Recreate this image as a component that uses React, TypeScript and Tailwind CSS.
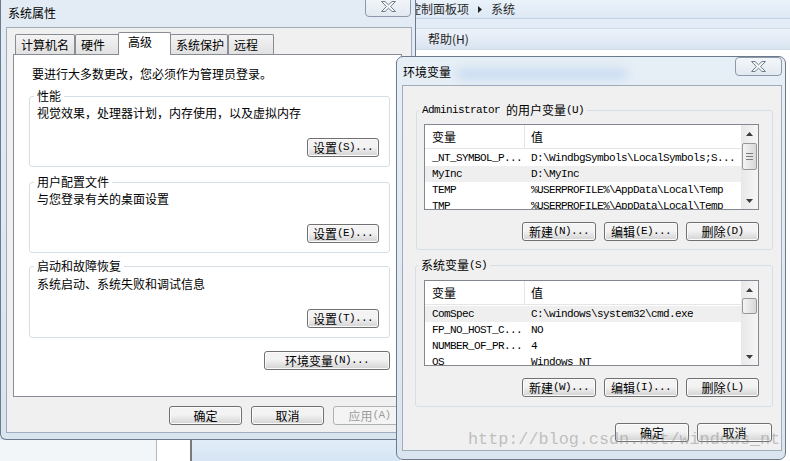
import React from 'react';
import clsx from 'clsx';

const mono = "font-['Liberation_Mono','Noto_Sans_CJK_SC',monospace] text-[11px] tracking-[-0.6px]";

function Acc({ zh, en }: { zh: string; en?: string }) {
  return (
    <>
      <span>{zh}</span>
      {en && <span className={mono}>{en}</span>}
    </>
  );
}

function Btn({ className, disabled, children }: { className?: string; disabled?: boolean; children: React.ReactNode }) {
  return (
    <div
      className={clsx(
        'flex h-[19px] shrink-0 items-center justify-center rounded-[3px] border leading-none',
        disabled
          ? 'border-[#adb2b5] bg-[#f4f4f4] text-[#9c9c9c]'
          : 'border-[#707070] bg-linear-to-b from-[#f3f3f3] from-45% to-[#d3d3d3] text-black shadow-[inset_0_0_0_1px_#fbfbfb]',
        className
      )}
    >
      {children}
    </div>
  );
}

function CloseBtn({ className }: { className: string }) {
  return (
    <div className={clsx('absolute flex items-center justify-center rounded-[4px] border border-[#8d99a8] bg-linear-to-b from-[#f4f7fa] to-[#e2e9f0]', className)}>
      <svg width="15" height="11" viewBox="0 0 15 11">
        <polygon
          points="0.5,0.5 4,0.5 7.5,3.8 11,0.5 14.5,0.5 9.6,5.5 14.5,10.5 11,10.5 7.5,7.2 4,10.5 0.5,10.5 5.4,5.5"
          fill="#f7f9fb"
          stroke="#6f7c8c"
          strokeWidth="1"
          strokeLinejoin="round"
        />
      </svg>
    </div>
  );
}

function Group({ label, labelClass, className, children }: { label: React.ReactNode; labelClass: string; className: string; children: React.ReactNode }) {
  return (
    <div className={clsx('relative flex shrink-0 flex-col rounded-[3px] border border-[#d5dfe5]', className)}>
      <span className={clsx('absolute -top-[8px] flex items-center px-[3px] leading-[14px] whitespace-nowrap', labelClass)}>{label}</span>
      {children}
    </div>
  );
}

function Arrow({ down }: { down?: boolean }) {
  return (
    <svg width="7" height="4" viewBox="0 0 7 4" className={down ? 'rotate-180' : ''}>
      <path d="M0 4L3.5 0L7 4Z" fill="#3c3c3c" />
    </svg>
  );
}

function ScrollBar({ thumbClass, grip }: { thumbClass: string; grip?: boolean }) {
  return (
    <div className="flex w-[17px] shrink-0 flex-col bg-linear-to-r from-[#e8e8e8] to-[#f6f6f6]">
      <div className="flex h-[17px] shrink-0 items-center justify-center">
        <Arrow />
      </div>
      <div className={clsx('mx-[1px] flex shrink-0 flex-col items-center justify-center gap-[2px] rounded-[2px] border border-[#979797] bg-linear-to-r from-[#f4f4f4] to-[#d8d8d8]', thumbClass)}>
        {grip && (
          <>
            <i className="block h-px w-[7px] bg-[#7d7d7d]" />
            <i className="block h-px w-[7px] bg-[#7d7d7d]" />
            <i className="block h-px w-[7px] bg-[#7d7d7d]" />
          </>
        )}
      </div>
      <div className="flex-1" />
      <div className="flex h-[17px] shrink-0 items-center justify-center">
        <Arrow down />
      </div>
    </div>
  );
}

function VarList({ rows, hl, thumbClass, grip }: { rows: [string, string][]; hl: number; thumbClass: string; grip?: boolean }) {
  return (
    <div className="flex h-[86px] w-[335px] shrink-0 overflow-hidden border border-[#828790] bg-white">
      <div className="flex flex-1 flex-col overflow-hidden">
        <div className="flex h-[24px] shrink-0 border-b border-[#e5e5e5]">
          <div className="flex w-[100px] items-center border-r border-[#e5e5e5] pl-[7px]">变量</div>
          <div className="flex flex-1 items-center pl-[6px]">值</div>
        </div>
        <div className="pt-[1px]">
          {rows.map((r, i) => (
            <div key={i} className={clsx('flex h-[16px] items-center whitespace-nowrap', mono, i === hl && 'bg-[#efefef]')}>
              <div className="w-[100px] shrink-0 pl-[7px]">{r[0]}</div>
              <div className="pl-[6px]">{r[1]}</div>
            </div>
          ))}
        </div>
      </div>
      <ScrollBar thumbClass={thumbClass} grip={grip} />
    </div>
  );
}

const userVars: [string, string][] = [
  ['_NT_SYMBOL_P...', 'D:\\WindbgSymbols\\LocalSymbols;S...'],
  ['MyInc', 'D:\\MyInc'],
  ['TEMP', '%USERPROFILE%\\AppData\\Local\\Temp'],
  ['TMP', '%USERPROFILE%\\AppData\\Local\\Temp'],
];

const sysVars: [string, string][] = [
  ['ComSpec', 'C:\\windows\\system32\\cmd.exe'],
  ['FP_NO_HOST_C...', 'NO'],
  ['NUMBER_OF_PR...', '4'],
  ['OS', 'Windows_NT'],
];

const tabs = [
  { name: '计算机名', w: 'w-[60px]' },
  { name: '硬件', w: 'w-[44px]' },
  { name: '高级', w: 'w-[53px]', active: true },
  { name: '系统保护', w: 'w-[58px]' },
  { name: '远程', w: 'w-[46px]' },
];

function SystemProps() {
  return (
    <div className="absolute left-0 top-0 z-10 flex h-[440px] w-[416px] flex-col rounded-b-[6px] border-x border-b border-[#6b7b8c] bg-linear-to-b from-[#e3ecf5] to-[#d9e4ef]">
      <div className="h-[27px] shrink-0 pl-[7px] pt-[5px] text-[12px] leading-[16px]">系统属性</div>
      <CloseBtn className="right-[4px] -top-[4px] h-[21px] w-[46px]" />
      <div className="ml-[5px] flex h-[406px] w-[406px] flex-col border border-[#a0acb9] bg-[#f0f0f0]">
        <div className="ml-[8px] mt-[4px] flex h-[22px] items-end">
          {tabs.map((t) =>
            t.active ? (
              <div key={t.name} className={clsx('relative z-10 -mb-px -mx-[1px] h-[23px] rounded-t-[2px] border border-b-0 border-[#898c95] bg-white pl-[9px] pt-[1px] leading-[16px]', t.w)}>
                {t.name}
              </div>
            ) : (
              <div key={t.name} className={clsx('h-[20px] rounded-t-[2px] border border-b-0 border-[#898c95] bg-linear-to-b from-[#f4f4f4] to-[#e1e1e1] pl-[5px] pt-[2px] leading-[16px]', t.w)}>
                {t.name}
              </div>
            )
          )}
        </div>
        <div className="ml-[6px] flex h-[343px] w-[389px] shrink-0 flex-col border border-[#898c95] bg-white">
          <div className="ml-[18px] mt-[12px] leading-[14px]">要进行大多数更改，您必须作为管理员登录。</div>
          <Group label="性能" labelClass="left-[4px] bg-white" className="ml-[15px] mt-[15px] h-[71px] w-[361px] pb-[9px] pl-[7px] pr-[10px] pt-[9px]">
            <div className="leading-[14px]">视觉效果，处理器计划，内存使用，以及虚拟内存</div>
            <Btn className="mt-auto w-[72px] self-end">
              <Acc zh="设置" en="(S)..." />
            </Btn>
          </Group>
          <Group label="用户配置文件" labelClass="left-[4px] bg-white" className="ml-[15px] mt-[15px] h-[71px] w-[361px] pb-[9px] pl-[7px] pr-[10px] pt-[9px]">
            <div className="leading-[14px]">与您登录有关的桌面设置</div>
            <Btn className="mt-auto w-[72px] self-end">
              <Acc zh="设置" en="(E)..." />
            </Btn>
          </Group>
          <Group label="启动和故障恢复" labelClass="left-[4px] bg-white" className="ml-[15px] mt-[13px] h-[72px] w-[361px] pb-[9px] pl-[7px] pr-[10px] pt-[10px]">
            <div className="leading-[14px]">系统启动、系统失败和调试信息</div>
            <Btn className="mt-auto w-[72px] self-end">
              <Acc zh="设置" en="(T)..." />
            </Btn>
          </Group>
          <Btn className="ml-[250px] mt-[13px] w-[126px]">
            <Acc zh="环境变量" en="(N)..." />
          </Btn>
        </div>
        <div className="ml-[162px] mt-[9px] flex gap-[9px]">
          <Btn className="w-[73px]">确定</Btn>
          <Btn className="w-[73px]">取消</Btn>
          <Btn disabled className="w-[73px]">
            <Acc zh="应用" en="(A)" />
          </Btn>
        </div>
      </div>
    </div>
  );
}

function EnvVars() {
  return (
    <div className="absolute left-[396px] top-[56px] z-20 flex h-[404px] w-[390px] flex-col rounded-[7px] border border-[#6b7b8c] bg-linear-to-b from-[#e6eef6] to-[#dbe5f0]">
      <div className="relative h-[28px] shrink-0 pl-[6px] pt-[7px] leading-[16px]">
        <span className="absolute left-[60px] top-[12px] h-[10px] w-[170px] rounded-full bg-[#9cc0ec]/40 blur-[5px]" />
        <span className="relative">环境变量</span>
      </div>
      <CloseBtn className="right-[3px] top-0 h-[19px] w-[47px]" />
      <div className="ml-[5px] flex h-[366px] w-[380px] flex-col border border-[#a0acb9] bg-[#f0f0f0]">
        <Group
          label={
            <>
              <span className={mono}>Administrator&nbsp;</span>
              <span>的用户变量</span>
              <span className={mono}>(U)</span>
            </>
          }
          labelClass="left-[2px] bg-[#f0f0f0]"
          className="ml-[13px] mt-[24px] h-[140px] w-[357px] pl-[7px] pr-[13px] pt-[13px]"
        >
          <VarList rows={userVars} hl={1} thumbClass="mt-[1px] h-[27px]" grip />
          <div className="mt-[12px] flex justify-end gap-[8px]">
            <Btn className="w-[74px]">
              <Acc zh="新建" en="(N)..." />
            </Btn>
            <Btn className="w-[74px]">
              <Acc zh="编辑" en="(E)..." />
            </Btn>
            <Btn className="w-[73px]">
              <Acc zh="删除" en="(D)" />
            </Btn>
          </div>
        </Group>
        <Group
          label={<Acc zh="系统变量" en="(S)" />}
          labelClass="left-[2px] bg-[#f0f0f0]"
          className="ml-[12px] mt-[15px] h-[142px] w-[358px] pl-[8px] pr-[13px] pt-[14px]"
        >
          <VarList rows={sysVars} hl={0} thumbClass="h-[16px]" />
          <div className="mt-[12px] flex justify-end gap-[8px]">
            <Btn className="w-[74px]">
              <Acc zh="新建" en="(W)..." />
            </Btn>
            <Btn className="w-[74px]">
              <Acc zh="编辑" en="(I)..." />
            </Btn>
            <Btn className="w-[73px]">
              <Acc zh="删除" en="(L)" />
            </Btn>
          </div>
        </Group>
        <div className="mt-[16px] flex justify-end gap-[8px] pr-[9px]">
          <Btn className="w-[74px]">确定</Btn>
          <Btn className="w-[75px]">取消</Btn>
        </div>
      </div>
    </div>
  );
}

export default function App() {
  return (
    <div className="relative h-[461px] w-[790px] overflow-hidden bg-[#dce8f4] font-['Noto_Sans_CJK_SC','Noto_Sans',sans-serif] text-[12px] text-black">
      {/* explorer window behind */}
      <div className="absolute left-[380px] top-0 flex h-[461px] w-[410px] flex-col bg-white">
        <div className="flex h-[19px] shrink-0 items-center gap-[9px] border-b border-[#c3d2e2] bg-linear-to-b from-[#eaf2fa] to-[#dde9f5] pl-[29px] text-[#2a2a2a]">
          <span>控制面板项</span>
          <svg width="4" height="7" viewBox="0 0 4 7">
            <path d="M0 0L4 3.5L0 7Z" fill="#222" />
          </svg>
          <span>系统</span>
        </div>
        <div className="h-[9px] shrink-0 bg-[#e4edf7]" />
        <div className="flex h-[22px] shrink-0 items-center border-y border-[#d0dcea] bg-linear-to-b from-[#eef3fa] to-[#d9e4f1] pl-[48px] text-[#1e1e1e]">
          帮助(H)
        </div>
        <div className="flex-1 bg-white" />
      </div>
      {/* strip under the left dialog */}
      <div className="absolute left-0 top-[440px] flex h-[21px] w-[400px]">
        <div className="w-[157px] border-r border-[#b8b8b8] bg-[#f3f6f9]" />
        <div className="w-[35px] border-r-2 border-[#7a7a7a] bg-white" />
        <div className="flex-1 bg-linear-to-b from-[#e2edf8] to-[#d6e5f4]" />
      </div>
      <SystemProps />
      <EnvVars />
      <div className="pointer-events-none absolute left-[468px] top-[430px] z-30 font-['Liberation_Mono',monospace] text-[16.8px] leading-[20px] text-[#8c8c8c]/50 whitespace-nowrap">
        http://blog.csdn.net/windows_nt
      </div>
    </div>
  );
}
